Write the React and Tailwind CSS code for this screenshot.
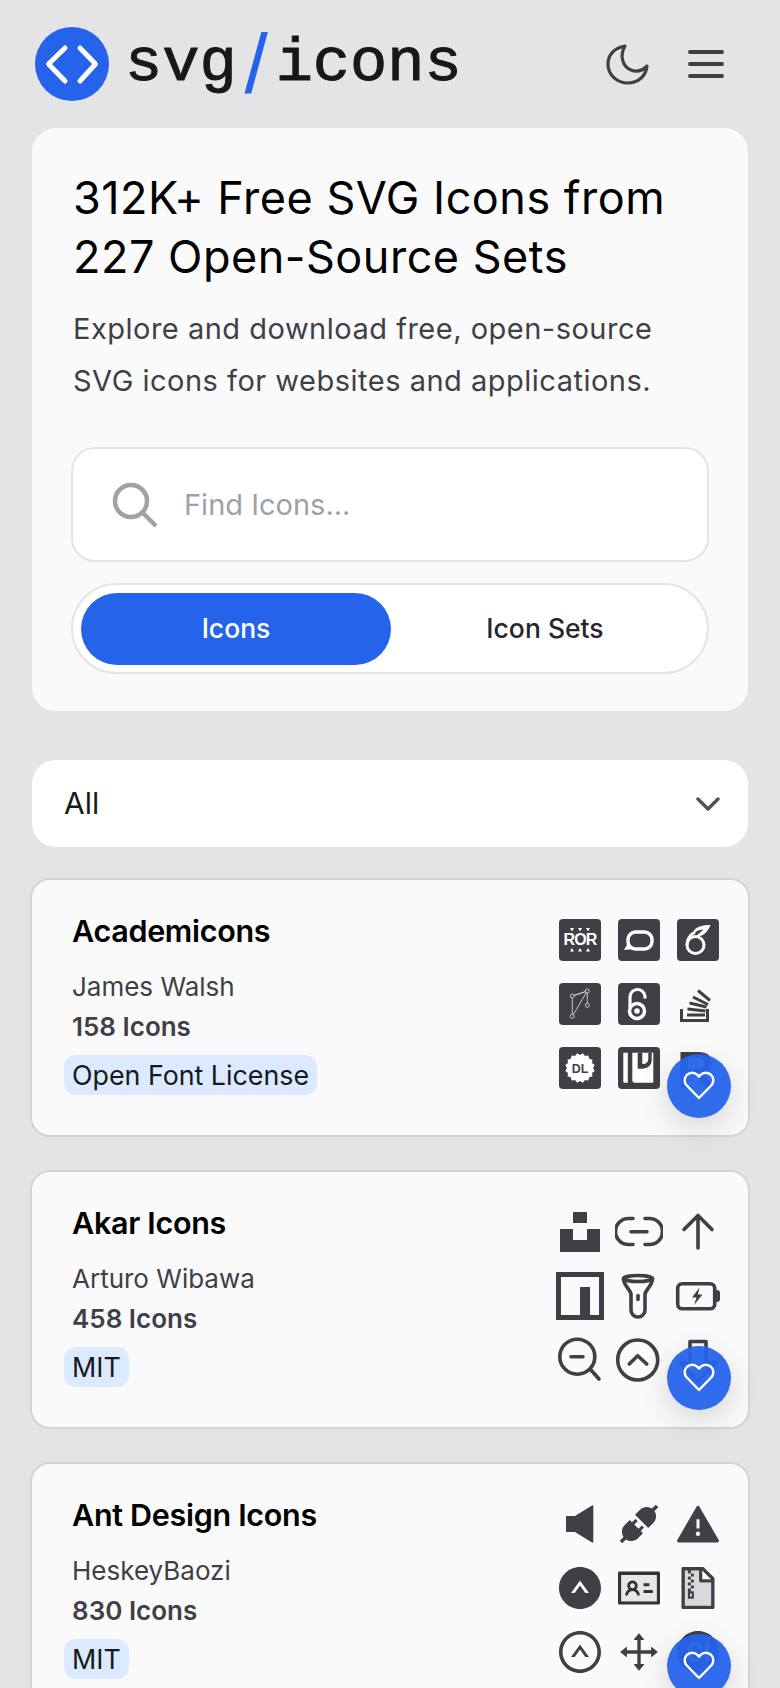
import React from "react";
import {
  AiFillApi,
  AiFillWarning,
  AiFillUpCircle,
  AiTwotoneIdcard,
  AiTwotoneFileZip,
  AiOutlineUpCircle,
  AiOutlineDrag,
  AiFillCiCircle,
} from "react-icons/ai";

const Box = ({ children }) => (
  <svg width="48" height="48" viewBox="0 0 48 48" fill="none">
    <rect x="3" y="3" width="42" height="42" rx="4" fill="#3f3f46" />
    {children}
  </svg>
);

const Line = ({ children }) => (
  <svg width="48" height="48" viewBox="0 0 48 48" fill="none" stroke="#3f3f46" strokeWidth="3.6" strokeLinecap="round" strokeLinejoin="round">
    {children}
  </svg>
);

const burst = Array.from({ length: 32 }, (_, i) => {
  const r = i % 2 ? 15 : 13;
  const a = (i * Math.PI) / 16;
  return `${24 + r * Math.cos(a)},${24 + r * Math.sin(a)}`;
}).join(" ");

const academicons = [
  <Box key="ror">
    <text x="24" y="29" textAnchor="middle" fontFamily="Liberation Sans" fontWeight="700" fontSize="16" letterSpacing="-0.8" fill="#fff">ROR</text>
    <path d="M14 12h4l-2 3.500zM22 12h4l-2 3.500zM30 12h4l-2 3.500zM14 35.500h4l-2-3.500zM22 35.500h4l-2-3.500zM30 35.500h4l-2-3.500z" fill="#fff" />
  </Box>,
  <Box key="bubble">
    <rect x="13" y="16" width="24" height="17" rx="7.500" stroke="#fff" strokeWidth="3.500" />
    <path d="M13 27l-4 7 10-1z" fill="#fff" />
  </Box>,
  <Box key="overleaf">
    <circle cx="21.500" cy="29" r="8.500" stroke="#fff" strokeWidth="3" />
    <path d="M13 29c0-6 3-10 8-13" stroke="#fff" strokeWidth="3" />
    <path d="M20 14c4-4 10-5 16.500-5-2 5-6 12-15 11.500 3-3 6-5 8-7-3 0-6 1-9 3z" fill="#fff" />
  </Box>,
  <Box key="graph">
    <g stroke="#d4d4d8" strokeWidth="0.900">
      <path d="M16.300 16L31.300 11V25.300M16.300 16V36.300L31.300 11M16.300 16L31.300 11" />
      <circle cx="16.300" cy="16" r="2" fill="#3f3f46" />
      <circle cx="31.300" cy="11" r="2" fill="#3f3f46" />
      <circle cx="31.300" cy="25.300" r="2" fill="#3f3f46" />
      <circle cx="16.300" cy="36.300" r="2" fill="#3f3f46" />
    </g>
  </Box>,
  <Box key="open">
    <circle cx="22" cy="31" r="7.500" stroke="#fff" strokeWidth="3.500" />
    <circle cx="22" cy="31" r="2.800" fill="#fff" />
    <path d="M15 28V17.500a7.500 7.500 0 0 1 15-1v2" stroke="#fff" strokeWidth="3.200" />
  </Box>,
  <svg key="stack" width="48" height="48" viewBox="0 0 48 48" fill="none" stroke="#3f3f46" strokeWidth="3">
    <path d="M7.500 29V40.500H33.500V29" />
    <path d="M13 35H31M13.500 29L31.500 31M15.500 23L32.500 27M19 17L34 24.500M24 10.500L36 20.500" />
  </svg>,
  <Box key="dl">
    <polygon points={burst} fill="#fff" />
    <text x="24" y="28.500" textAnchor="middle" fontFamily="Liberation Sans" fontWeight="700" fontSize="12.500" fill="#3f3f46">DL</text>
  </Box>,
  <Box key="pp">
    <path d="M8.300 8.700h4.500v30H9.300a1 1 0 0 1-1-1zM17.300 8.700h21v30H20a2.700 2.700 0 0 1-2.700-2.700z" fill="#fff" />
    <path d="M22.700 8.700h14v7.500c0 6-5 8.500-11 8.500h-3zM27.300 8.700V20c4 0 6-2 6-5.500V8.700z" fill="#3f3f46" fillRule="evenodd" />
  </Box>,
  <svg key="r" width="48" height="48" viewBox="0 0 48 48">
    <text x="3" y="44" fontFamily="Liberation Sans" fontWeight="700" fontSize="52" fill="#3f3f46">R</text>
  </svg>,
];

const akar = [
  <svg key="unsplash" width="48" height="48" viewBox="0 0 48 48" fill="#3f3f46">
    <path d="M17 4h14v11H17zM4 21h13v11h14V21h13v23H4z" />
  </svg>,
  <Line key="link">
    <path d="M18 10.500h-4.500a13 13 0 0 0 0 26H18M30 10.500h4.500a13 13 0 0 1 0 26H30M16 23.700h16" />
  </Line>,
  <Line key="up">
    <path d="M24 7.500V40M10 21.500L24 7.500L38 21.500" />
  </Line>,
  <svg key="npm" width="48" height="48" viewBox="0 0 48 48" fill="#3f3f46">
    <path fillRule="evenodd" d="M0 0h48v48H0zM5 5v38h19V15h10v28h9V5z" />
  </svg>,
  <Line key="flash">
    <ellipse cx="23" cy="6.500" rx="14.500" ry="3" />
    <path d="M8.500 7c0 6 7 11 7.500 15v16a7 7 0 0 0 14 0V22c.5-4 7.500-9 7.500-15M23 23.500v4" />
  </Line>,
  <svg key="battery" width="48" height="48" viewBox="0 0 48 48" fill="none">
    <rect x="3.700" y="11.800" width="37" height="25" rx="4.500" stroke="#3f3f46" strokeWidth="3.600" />
    <path d="M42 18h1a3 3 0 0 1 3 3v6a3 3 0 0 1-3 3h-1z" fill="#3f3f46" />
    <path d="M25.500 15.500l-7.500 10h4.500l-2.500 7.500 8.500-10.500h-4.500z" fill="#3f3f46" />
  </svg>,
  <Line key="zoom">
    <circle cx="21.300" cy="20.700" r="17.500" />
    <path d="M35 34l8 9M15 20.700h12" />
  </Line>,
  <Line key="chev">
    <circle cx="22.700" cy="24" r="20" />
    <path d="M14.300 28l8.400-8.300 9 8.300" />
  </Line>,
  <Line key="down">
    <path d="M16 5.500h16V27h10L24 45 6 27h10z" />
  </Line>,
];

const ant = [
  <svg key="speaker" width="48" height="48" viewBox="0 0 48 48" fill="#3f3f46">
    <path d="M10 16h9L36 5.500c.7-.4 1.300 0 1.300.8v35.400c0 .8-.6 1.200-1.300.8L19 32h-9z" />
  </svg>,
  ...[
    AiFillApi,
    AiFillWarning,
    AiFillUpCircle,
    AiTwotoneIdcard,
    AiTwotoneFileZip,
    AiOutlineUpCircle,
    AiOutlineDrag,
    AiFillCiCircle,
  ].map((Icon, i) => <Icon key={i} size={48} color="#3f3f46" />),
];

const sets = [
  { name: "Academicons", author: "James Walsh", count: "158 Icons", license: "Open Font License", icons: academicons, heart: "top-[174px]" },
  { name: "Akar Icons", author: "Arturo Wibawa", count: "458 Icons", license: "MIT", icons: akar, heart: "top-[174px]" },
  { name: "Ant Design Icons", author: "HeskeyBaozi", count: "830 Icons", license: "MIT", icons: ant, heart: "top-[170px]" },
];

const SetCard = ({ set }) => (
  <div className="relative flex h-[259px] shrink-0 justify-between rounded-[20px] border-2 border-zinc-300 bg-[#fafafa] pt-[34px] pl-[40px] pr-[26px]">
    <div>
      <div className="text-[30.500px] leading-[34px] font-semibold tracking-[-0.3px] text-black">{set.name}</div>
      <div className="mt-[19px] text-[26px] leading-[40px] text-zinc-700">{set.author}</div>
      <div className="text-[26px] leading-[40px] font-semibold text-zinc-700">{set.count}</div>
      <div className="-ml-[8px] mt-[8px] w-fit rounded-[12px] bg-blue-100 px-[8px] text-[26.800px] leading-[40px] text-zinc-900">{set.license}</div>
    </div>
    <div className="mt-[2px] grid h-fit grid-cols-[repeat(3,48px)] gap-x-[11px] gap-y-4">
      {set.icons.map((icon, i) => (
        <div key={i} className="size-12">{icon}</div>
      ))}
    </div>
    <button className={`absolute right-[17px] flex size-16 items-center justify-center rounded-full bg-[#2563eb]/95 shadow-[0_10px_30px_rgba(0,0,0,0.15)] ${set.heart}`}>
      <svg width="32" height="32" viewBox="0 0 32 32" fill="none" stroke="#fff" strokeWidth="2.500" strokeLinejoin="round">
        <path d="M16 28L3.800 15.500a7.600 7.600 0 0 1 0-10.500c3-3 8-3 10.700 0L16 6.500 17.500 5c2.700-3 7.700-3 10.700 0a7.600 7.600 0 0 1 0 10.500z" />
      </svg>
    </button>
  </div>
);

export default function App() {
  return (
    <div className="h-[1688px] overflow-hidden bg-zinc-200 px-[32px] font-['Inter',sans-serif]">
      {/* header */}
      <div className="flex h-[128px] items-center justify-between pl-[3px] pr-[24px]">
        <div className="flex items-center gap-[16px]">
          <svg width="74" height="74" viewBox="0 0 74 74" fill="none" stroke="#fff" strokeWidth="5" strokeLinecap="round" strokeLinejoin="round">
            <circle cx="37" cy="37" r="37" fill="#2563eb" stroke="none" />
            <path d="M30 21L13.500 37 30 54M45 21L60.500 37 45 54" />
          </svg>
          <div className="flex items-center font-['Liberation_Mono',monospace] text-[62px] leading-none text-zinc-900 [-webkit-text-stroke:1px_#18181b]">
            <span>svg</span>
            <span className="flex w-[39px] justify-center font-['Liberation_Sans',sans-serif] text-[84px] text-[#2563eb] [-webkit-text-stroke:0]">/</span>
            <span>icons</span>
          </div>
        </div>
        <div className="flex items-center gap-[36px]">
          <svg width="48" height="48" viewBox="0 0 48 48" fill="none" stroke="#3f3f46" strokeWidth="3.200" strokeLinejoin="round">
            <path d="M21 6C10 8 4 15 4 24c0 11 9 19 20 19 10 0 18-7 19-17-5 5-11 6-16 4C19 27 15 16 21 6z" />
          </svg>
          <svg width="36" height="28" viewBox="0 0 36 28" stroke="#3f3f46" strokeWidth="4" strokeLinecap="round">
            <path d="M2 2H34M2 14H34M2 26H34" />
          </svg>
        </div>
      </div>

      {/* hero */}
      <div className="flex h-[583px] flex-col rounded-[24px] bg-[#fafafa] px-[39px] pt-[40px]">
        <h1 className="ml-[2px] text-[45px] leading-[59px] tracking-[0.5px] text-black">312K+ Free SVG Icons from<br />227 Open-Source Sets</h1>
        <p className="ml-[2px] mt-[17px] text-[29px] leading-[52px] tracking-[0.5px] text-zinc-700">Explore and download free, open-source<br />SVG icons for websites and applications.</p>
        <div className="mt-[40px] flex h-[115px] items-center gap-[26px] rounded-[24px] border-2 border-zinc-200 bg-white pl-[39px]">
          <svg width="46" height="46" viewBox="0 0 46 46" fill="none" stroke="#a1a1aa" strokeWidth="4.500">
            <circle cx="19" cy="19" r="16" />
            <path d="M31 31L44 44" />
          </svg>
          <input placeholder="Find Icons..." className="min-w-0 flex-1 bg-transparent text-[29px] placeholder-zinc-400 outline-none" />
        </div>
        <div className="mt-[21px] flex h-[91px] items-center rounded-full border-2 border-zinc-200 bg-white px-[8px]">
          <div className="flex h-[72px] w-[310px] items-center justify-center rounded-full bg-[#2563eb] text-[26.500px] font-medium text-white">Icons</div>
          <div className="flex h-[72px] flex-1 items-center justify-center text-[26.500px] font-medium text-zinc-800">Icon Sets</div>
        </div>
      </div>

      {/* filter */}
      <div className="mt-[49px] flex h-[87px] items-center justify-between rounded-[24px] bg-white pl-[32px] pr-[28px] text-[30px] text-zinc-900">
        All
        <svg width="24" height="14" viewBox="0 0 24 14" fill="none" stroke="#52525b" strokeWidth="3.500" strokeLinecap="round" strokeLinejoin="round">
          <path d="M2 2L12 12 22 2" />
        </svg>
      </div>

      <div className="-mx-[2px] mt-[31px] flex flex-col gap-[33px]">
        {sets.map((set) => (
          <SetCard key={set.name} set={set} />
        ))}
      </div>
    </div>
  );
}
